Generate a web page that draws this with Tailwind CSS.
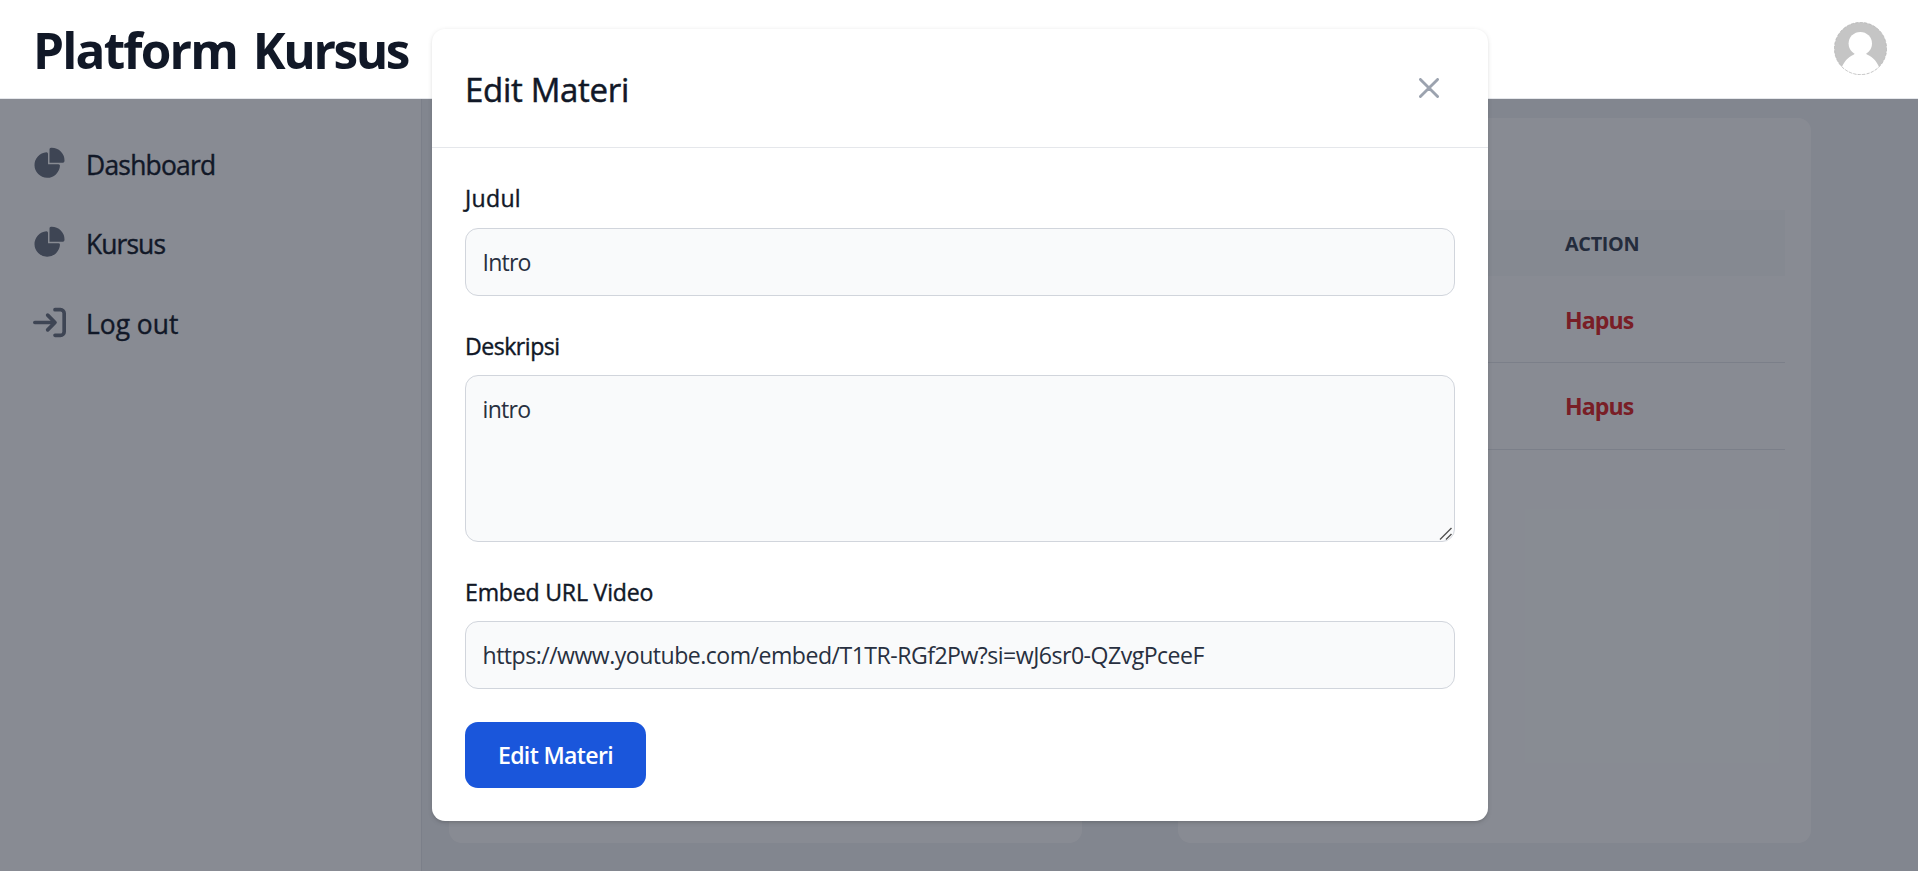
<!DOCTYPE html>
<html lang="id">
<head>
<meta charset="utf-8">
<title>Platform Kursus</title>
<script src="https://cdn.jsdelivr.net/npm/@tailwindcss/browser@4"></script>
</head>
<body class="h-screen overflow-hidden bg-[#f3f4f6] font-['Open_Sans',sans-serif] text-[#111827]">
<div class="flex h-full flex-col">
  <header class="flex h-[99px] shrink-0 items-center justify-between border-b border-gray-200 bg-white pl-[33px] pr-[31px]">
    <h1 class="pt-[1px] text-[49.5px] leading-[60px] font-bold tracking-[-2.15px] whitespace-nowrap [word-spacing:5px]"><span class="tracking-[-1.8px]">Platform</span> <span class="tracking-[-2.4px]">Kursus</span></h1>
    <svg class="mb-[2px] size-[53px]" viewBox="0 0 53 53">
      <defs><clipPath id="avatar"><circle cx="26.5" cy="26.5" r="26.2"/></clipPath></defs>
      <g clip-path="url(#avatar)">
        <rect width="53" height="53" fill="#c5c5c5"/>
        <circle cx="26.3" cy="21.6" r="11.7" fill="#fff"/>
        <path d="M20.500 29.500c.6 1.500.2 2.600-1 3.300C14 35 9.500 40.500 7.500 46L14 53h25l6.500-7C43.500 40.500 39 35 33.500 32.800c-1.500-.7-1.800-1.800-1.200-3.300Z" fill="#fff"/>
      </g>
      <circle cx="26.5" cy="26.5" r="26.1" fill="none" stroke="#b5b5b5" stroke-width=".7" stroke-dasharray="3 1.500"/>
    </svg>
  </header>
  <div class="flex min-h-0 flex-1">
    <aside class="w-[422px] shrink-0 border-r border-gray-200 bg-white px-[20px] pt-[31px]">
      <nav class="flex flex-col gap-[13.5px] text-[26.4px] leading-[40px] font-medium [-webkit-text-stroke:0.4px]">
        <a class="flex h-[66px] items-center px-[13px]">
          <svg class="size-[33px] text-[#6b7280]" fill="currentColor" viewBox="0 0 22 21"><path d="M16.975 11H10V4.025a1 1 0 0 0-1.066-.998 8.5 8.5 0 1 0 9.039 9.039.999.999 0 0 0-1-1.066h.002Z"/><path d="M12.5 0c-.157 0-.311.01-.565.027A1 1 0 0 0 11 1.02V10h8.975a1 1 0 0 0 1-.935c.013-.188.028-.374.028-.565A8.51 8.51 0 0 0 12.5 0Z"/></svg>
          <span class="ml-[20px] pt-[3px] tracking-[-0.75px]">Dashboard</span>
        </a>
        <a class="flex h-[66px] items-center px-[13px]">
          <svg class="size-[33px] text-[#6b7280]" fill="currentColor" viewBox="0 0 22 21"><path d="M16.975 11H10V4.025a1 1 0 0 0-1.066-.998 8.5 8.5 0 1 0 9.039 9.039.999.999 0 0 0-1-1.066h.002Z"/><path d="M12.5 0c-.157 0-.311.01-.565.027A1 1 0 0 0 11 1.02V10h8.975a1 1 0 0 0 1-.935c.013-.188.028-.374.028-.565A8.51 8.51 0 0 0 12.5 0Z"/></svg>
          <span class="ml-[20px] pt-[3px] tracking-[-0.9px]">Kursus</span>
        </a>
        <a class="flex h-[66px] items-center px-[13px]">
          <svg class="size-[33px] text-[#6b7280]" fill="none" stroke="currentColor" stroke-width="2" stroke-linecap="round" stroke-linejoin="round" viewBox="0 0 18 16"><path d="M1 8h11m0 0L8 4m4 4-4 4m4-11h3a2 2 0 0 1 2 2v10a2 2 0 0 1-2 2h-3"/></svg>
          <span class="ml-[20px] pt-[3px] tracking-[0px]">Log out</span>
        </a>
      </nav>
    </aside>
    <main class="grid flex-1 grid-cols-2 gap-[96px] pt-[19px] pr-[107px] pb-[28px] pl-[27px]">
      <section class="rounded-[13px] bg-white"></section>
      <section class="rounded-[13px] bg-white px-[26px] pt-[92px]">
        <div class="flex h-[66px] items-center bg-gray-50 pt-[2px] pl-[361px] text-[19.8px] font-bold tracking-[-0.3px] text-[#374151]">ACTION</div>
        <div class="flex h-[87px] items-center border-b border-gray-200 pt-[2px] pl-[361px] text-[23.1px] font-bold tracking-[-0.9px] text-[#e02424]">Hapus</div>
        <div class="flex h-[87px] items-center border-b border-gray-200 pt-[1px] pl-[361px] text-[23.1px] font-bold tracking-[-0.9px] text-[#e02424]">Hapus</div>
      </section>
    </main>
  </div>
</div>

<!-- Backdrop below the top bar -->
<div class="absolute inset-x-0 top-[99px] bottom-0 bg-[#111827]/50"></div>

<!-- Edit dialog -->
<div class="absolute top-[29px] left-[432px] w-[1056px] rounded-[13px] bg-white shadow-[0_1.6px_5px_rgba(0,0,0,0.1),0_1.6px_3px_-1px_rgba(0,0,0,0.1)]">
  <div class="flex h-[119px] items-center justify-between border-b border-gray-200 pr-[49px] pl-[33px]">
    <h2 class="pt-[4px] text-[33px] leading-[50px] font-medium tracking-[-0.3px] [-webkit-text-stroke:0.5px]">Edit Materi</h2>
    <svg class="size-[20px]" viewBox="0 0 14 14" fill="none" stroke="#9ca3af" stroke-width="2" stroke-linecap="round" stroke-linejoin="round"><path d="m1 1 6 6m0 0 6 6M7 7l6-6M7 7l-6 6"/></svg>
  </div>
  <form class="flex flex-col items-start p-[33px] text-[23.1px] leading-[33px]">
    <label class="h-[33px] pt-[1px] font-medium tracking-[0.3px] [-webkit-text-stroke:0.4px]">Judul</label>
    <input class="mt-[14px] h-[68px] w-full rounded-[13px] border border-gray-300 bg-[#f9fafb] px-[16.5px] tracking-[-0.8px] text-[#283040]" value="Intro">
    <label class="mt-[33px] h-[33px] pt-[1px] font-medium tracking-[-0.5px] [-webkit-text-stroke:0.4px]">Deskripsi</label>
    <div class="relative mt-[13px] h-[167px] w-full">
      <textarea class="block size-full resize-none rounded-[13px] border border-gray-300 bg-[#f9fafb] px-[16.5px] py-[17px] tracking-[-0.7px] text-[#283040]">intro</textarea>
      <svg class="absolute right-[2px] bottom-[1px] size-[14px]" viewBox="0 0 14 14" fill="none"><path d="M1 12.500 12.500 1M7 12.500l5.500-5.500" stroke="#fff" stroke-width="3"/><path d="M1 12.500 12.500 1M7 12.500l5.500-5.500" stroke="#555" stroke-width="1.500"/></svg>
    </div>
    <label class="mt-[33px] h-[33px] pt-[1px] font-medium tracking-[-0.2px] [-webkit-text-stroke:0.4px]">Embed URL Video</label>
    <input class="mt-[13px] h-[68px] w-full rounded-[13px] border border-gray-300 bg-[#f9fafb] px-[16.5px] tracking-[-0.52px] text-[#283040]" value="https://www.youtube.com/embed/T1TR-RGf2Pw?si=wJ6sr0-QZvgPceeF">
    <button type="button" class="mt-[33px] h-[66px] w-[181px] rounded-[13px] bg-[#1a56db] pt-[1px] font-semibold tracking-[-0.65px] text-white">Edit Materi</button>
  </form>
</div>
</body>
</html>
